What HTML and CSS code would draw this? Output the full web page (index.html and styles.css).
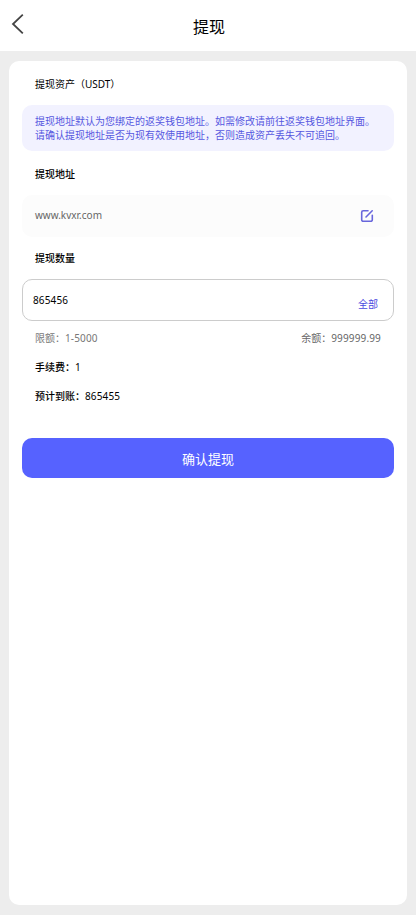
FILE: index.html
```html
<!DOCTYPE html>
<html lang="zh-CN">
<head>
<meta charset="utf-8">
<meta name="viewport" content="width=device-width, initial-scale=1">
<title>提现</title>
<link rel="stylesheet" href="styles.css">
</head>
<body>
<header class="navbar">
  <svg class="back" viewBox="0 0 14 22" aria-hidden="true"><path d="M11.8 1.6 2 11l9.8 9.4"/></svg>
  <h1 class="title">提现</h1>
</header>
<main class="card">
  <h2 class="label label-asset">提现资产（USDT）</h2>
  <p class="notice">提现地址默认为您绑定的返奖钱包地址。如需修改请前往返奖钱包地址界面。<br>请确认提现地址是否为现有效使用地址，否则造成资产丢失不可追回。</p>
  <h2 class="label label-address">提现地址</h2>
  <div class="address">
    <span class="url">www.kvxr.com</span>
    <svg class="edit" viewBox="0 0 14 14" aria-hidden="true"><path d="M8 1.7H3.2a1.5 1.5 0 0 0-1.5 1.5v7.6a1.5 1.5 0 0 0 1.5 1.5h7.6a1.5 1.5 0 0 0 1.5-1.5V6.2M6 8l6.2-6.2"/></svg>
  </div>
  <h2 class="label label-amount">提现数量</h2>
  <div class="amount">
    <span class="num">865456</span>
    <a class="all">全部</a>
  </div>
  <div class="limits">
    <span>限额：<span class="num">1-5000</span></span>
    <span class="balance">余额：<span class="num">999999.99</span></span>
  </div>
  <p class="detail">手续费：<span class="num">1</span></p>
  <p class="detail">预计到账：<span class="num">865455</span></p>
  <button class="submit" type="button">确认提现</button>
</main>
</body>
</html>
```
FILE: styles.css
```css
* { box-sizing: border-box; }

body {
  display: flex;
  flex-direction: column;
  height: 915px;
  margin: 0;
  background: #ededed;
  color: #000;
  font: 10px/14px "Noto Sans", "Noto Sans CJK SC", sans-serif;
}

.navbar {
  display: grid;
  grid-template-columns: 48px 1fr 48px;
  align-items: center;
  height: 51px;
  background: #fff;
}

.back {
  width: 14px;
  height: 22px;
  margin: 0 0 3px 11px;
  fill: none;
  stroke: #444;
  stroke-width: 1.8;
}

.title {
  margin: 2px 0 0 2px;
  font-size: 16px;
  font-weight: 400;
  line-height: 24px;
  text-align: center;
}

.card {
  flex: 1;
  margin: 10px 9px;
  padding: 16px 13px;
  border-radius: 10px;
  background: #fff;
}

.label {
  margin: 0;
  padding-left: 13px;
  font-size: 10px;
  font-weight: 500;
}

.label-asset { font-weight: 400; }

.notice {
  height: 46px;
  margin: 14px 0 0;
  padding: 9px 0 9px 13px;
  border-radius: 10px;
  background: #f2f2ff;
  color: #5658df;
  white-space: nowrap;
}

.label-address { margin-top: 16px; }

.address {
  display: flex;
  align-items: center;
  justify-content: space-between;
  height: 42px;
  margin-top: 14px;
  padding: 0 20px 0 13px;
  border-radius: 10px;
  background: #fcfcfc;
  color: #666;
}

.url { padding-bottom: 2px; }

.edit {
  width: 14px;
  height: 14px;
  fill: none;
  stroke: #6866dc;
  stroke-width: 1.6;
  stroke-linecap: round;
}

.label-amount { margin-top: 14px; }

.amount {
  display: flex;
  align-items: center;
  justify-content: space-between;
  height: 42px;
  margin-top: 14px;
  padding: 0 15px 0 10px;
  border: 1px solid #ccc;
  border-radius: 10px;
}

.num {
  font-weight: 400;
  letter-spacing: 0.15px;
}

.all {
  margin-top: 8px;
  color: #4a4ae0;
}

.limits {
  display: flex;
  justify-content: space-between;
  margin: 10px 0 15px;
  padding: 0 13px;
  color: #777;
}

.balance { color: #666; }

.detail {
  margin: 0 0 15px;
  padding-left: 13px;
  font-weight: 500;
}

.submit {
  display: block;
  width: 100%;
  height: 40px;
  margin-top: 35px;
  padding: 1px 0 0;
  border: 0;
  border-radius: 10px;
  background: #5662ff;
  color: #fff;
  font: 13px/20px "Noto Sans", "Noto Sans CJK SC", sans-serif;
}
```
